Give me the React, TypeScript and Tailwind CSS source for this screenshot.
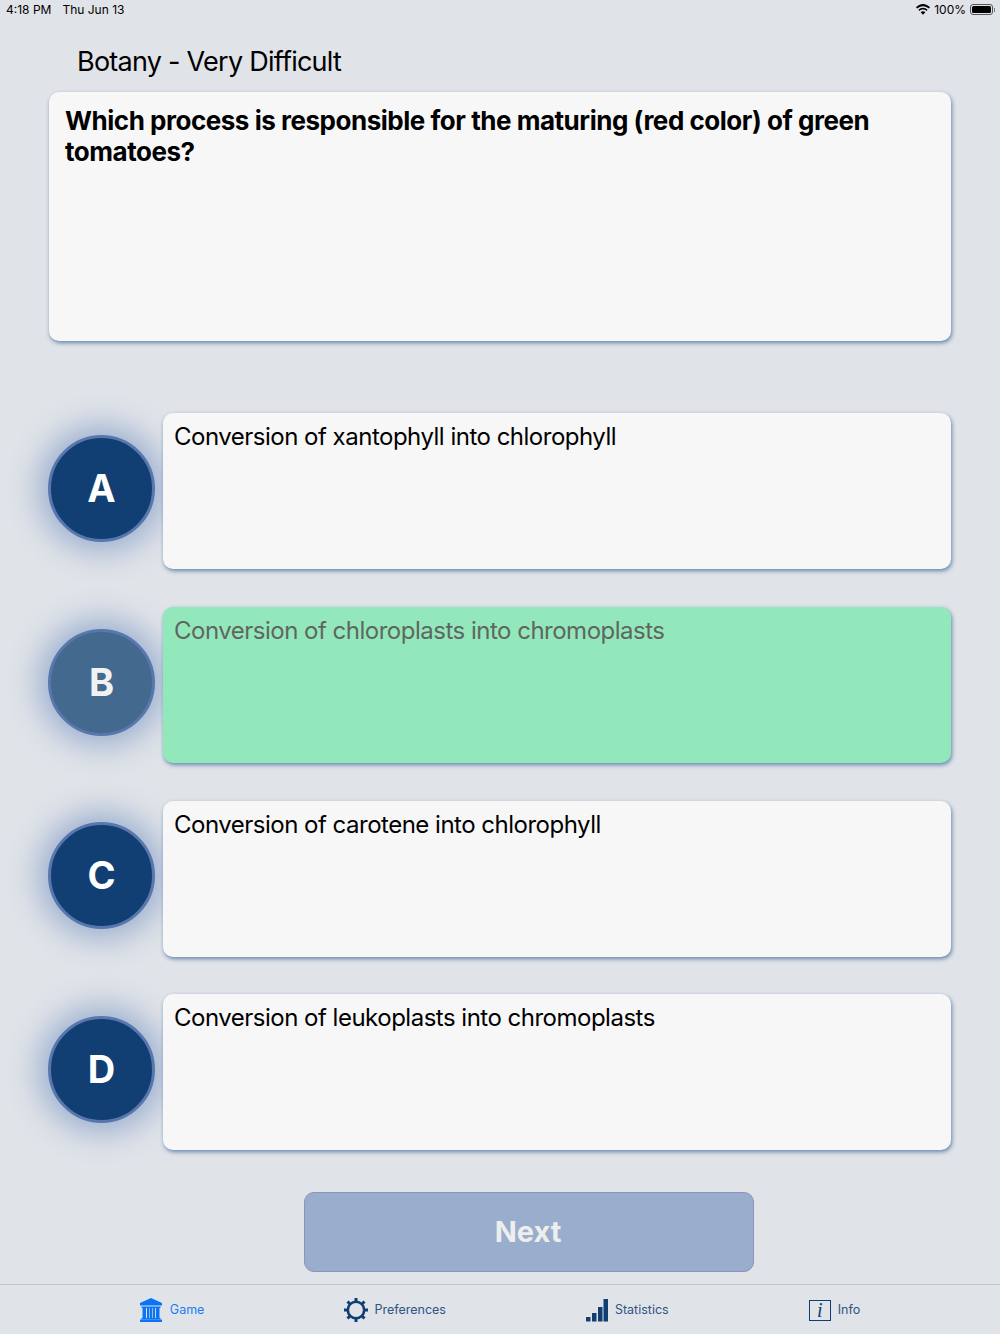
const answers = [
  { letter: 'A', text: 'Conversion of xantophyll into chlorophyll' },
  { letter: 'B', text: 'Conversion of chloroplasts into chromoplasts', correct: true },
  { letter: 'C', text: 'Conversion of carotene into chlorophyll' },
  { letter: 'D', text: 'Conversion of leukoplasts into chromoplasts' },
];

const BankIcon = () => (
  <svg width="22" height="24" viewBox="0 0 22 24" fill="#0a74f5">
    <path d="M11 0 L22 5 V7.5 H0 V5 Z" />
    <rect x="1.5" y="8.5" width="19" height="1.5" />
    <rect x="2.5" y="10" width="3.5" height="10" />
    <rect x="7" y="10" width="2.3" height="10" />
    <rect x="9.9" y="10" width="2.3" height="10" />
    <rect x="12.8" y="10" width="2.3" height="10" />
    <rect x="16" y="10" width="3.5" height="10" />
    <rect x="1.5" y="20" width="19" height="1.5" />
    <rect x="0" y="21.5" width="22" height="2.5" />
  </svg>
);

const GearIcon = () => (
  <svg width="24" height="24" viewBox="0 0 24 24" fill="none" stroke="#123f73">
    <circle cx="12" cy="12" r="8.2" strokeWidth="2.6" />
    <g strokeWidth="3">
      <path d="M12 0 V3.5 M12 20.5 V24 M0 12 H3.5 M20.5 12 H24" />
      <path d="M3.5 3.5 L6 6 M18 18 L20.5 20.5 M3.5 20.5 L6 18 M18 6 L20.5 3.5" />
    </g>
  </svg>
);

const BarsIcon = () => (
  <svg width="22" height="23" viewBox="0 0 22 23" fill="#123f73">
    <rect x="0" y="18" width="4.5" height="4.5" />
    <rect x="6" y="14" width="4.5" height="8.5" />
    <rect x="12" y="8" width="4.5" height="14.5" />
    <rect x="17.5" y="0" width="4.5" height="22.5" />
  </svg>
);

const InfoIcon = () => (
  <div className="flex h-[21px] w-[22px] items-center justify-center border-[1.5px] border-[#123f73] font-['Liberation_Serif',serif] text-[20px] leading-none italic text-[#123f73]">
    i
  </div>
);

const tabs = [
  { label: 'Game', icon: <BankIcon />, active: true, gap: 'gap-[8px]' },
  { label: 'Preferences', icon: <GearIcon />, gap: 'gap-[6px]' },
  { label: 'Statistics', icon: <BarsIcon />, gap: 'gap-[7px]' },
  { label: 'Info', icon: <InfoIcon />, gap: 'gap-[7px]' },
];

const App = () => {
  return (
    <div className="flex h-[1334px] w-[1000px] flex-col overflow-hidden bg-[#e0e3e8] font-['Inter',sans-serif] text-black">
      <div className="flex h-5 items-center justify-between pr-[5px] pl-[6px] text-[12px]">
        <div className="flex gap-[11px]">
          <span>4:18 PM</span>
          <span>Thu Jun 13</span>
        </div>
        <div className="flex items-center gap-[4px]">
          <svg width="14" height="11" viewBox="0 0 14 11" fill="black">
            <path d="M7 2.2 C9.3 2.2 11.3 3.1 12.8 4.6 L14 3.3 C12.2 1.3 9.7 0 7 0 C4.3 0 1.8 1.3 0 3.3 L1.2 4.6 C2.7 3.1 4.7 2.2 7 2.2 Z" />
            <path d="M7 5.5 C8.3 5.5 9.5 6 10.4 6.9 L11.6 5.7 C10.4 4.5 8.8 3.7 7 3.7 C5.2 3.7 3.6 4.5 2.4 5.7 L3.6 6.9 C4.5 6 5.7 5.5 7 5.5 Z" />
            <path d="M7 7.2 C6.1 7.2 5.3 7.6 4.7 8.2 L7 10.8 L9.3 8.2 C8.7 7.6 7.9 7.2 7 7.2 Z" />
          </svg>
          <span>100%</span>
          <div className="flex items-center">
            <div className="h-[11px] w-[23px] rounded-[3px] border border-[#555] p-[1px]">
              <div className="h-full w-full rounded-[1.5px] bg-black" />
            </div>
            <div className="ml-[1px] h-[4px] w-[1px] bg-[#777]" />
          </div>
        </div>
      </div>

      <h1 className="mt-[22px] mb-[-1px] ml-[77px] text-[27px] leading-[40px] font-normal tracking-[-0.75px]">
        Botany - Very Difficult
      </h1>

      <div className="mt-[11px] mr-[49px] ml-[49px] h-[250px] rounded-[10px] bg-[#f7f7f7] px-[16px] py-[13px] text-[26px] leading-[31px] font-bold tracking-[-0.47px] shadow-[1px_2px_4px_0px_#6486ad]">
        Which process is responsible for the maturing (red color) of green tomatoes?
      </div>

      <div className="mt-[72px] flex flex-col gap-[37.67px] pr-[49px] pl-[49px]">
        {answers.map((a) => (
          <div key={a.letter} className="flex h-[156px] items-center gap-[8px]">
            <div
              className={`mb-[6px] -ml-px flex h-[107px] w-[107px] shrink-0 items-center justify-center rounded-full border-[3px] border-[#5777ad] text-[38px] font-bold shadow-[0_0_30px_10px_#9cb0d0] ${
                a.correct ? 'bg-[#44698f] text-[#f1f1f1]' : 'bg-[#123f73] text-white'
              }`}
            >
              {a.letter}
            </div>
            <div
              className={`z-10 h-[156px] flex-1 rounded-[10px] px-[11px] pt-[7px] text-[24px] leading-[34px] tracking-[-0.5px] shadow-[1px_2px_4px_0px_#6486ad] ${
                a.correct ? 'bg-[#93e8bb] text-[#5f6662]' : 'bg-[#f7f7f7] text-black'
              }`}
            >
              {a.text}
            </div>
          </div>
        ))}
      </div>

      <div className="mt-[42px] ml-[304px] flex h-[80px] w-[450px] items-center justify-center rounded-[10px] border border-[#8a92bd] bg-[#99adcc] pr-[2px] text-[29px] font-bold text-[#eeeeee]">
        Next
      </div>

      <div className="mt-[12px] flex h-[50px] items-center justify-center gap-[140px] border-t border-[#c3c6cc] pt-[1px] text-[12.5px]">
        {tabs.map((t) => (
          <div
            key={t.label}
            className={`flex items-center ${t.gap} ${t.active ? 'text-[#1a7ff5]' : 'text-[#2f5585]'}`}
          >
            {t.icon}
            <span>{t.label}</span>
          </div>
        ))}
      </div>
    </div>
  );
};

export default App;
